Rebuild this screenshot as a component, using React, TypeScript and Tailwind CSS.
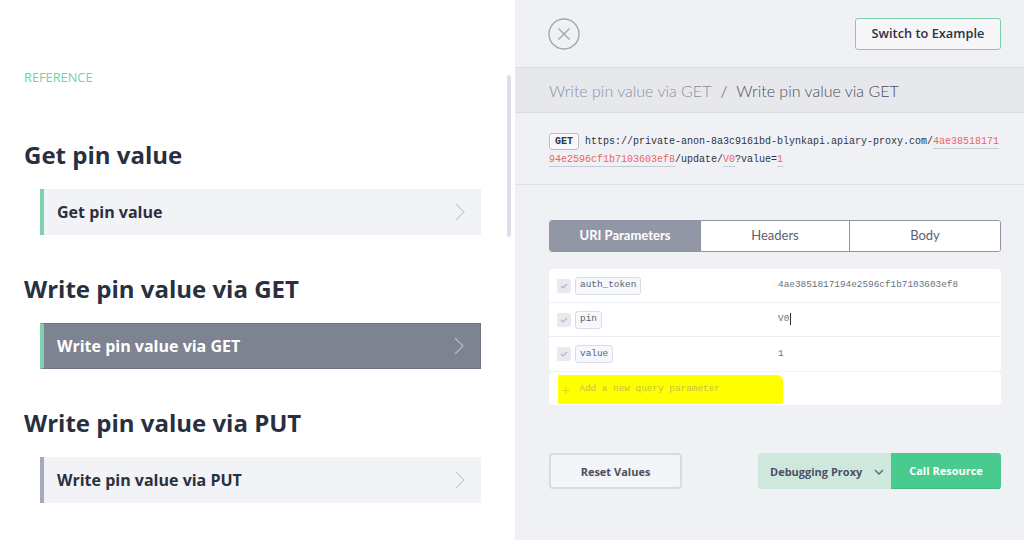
import React from 'react';

const sans = "font-['Lato','Open_Sans',sans-serif]";
const open = "font-['Open_Sans','Lato',sans-serif]";
const mono = "font-['Liberation_Mono','DejaVu_Sans_Mono',monospace]";

function Chevron({ color }: { color: string }) {
  return (
    <svg width="10" height="18" viewBox="0 0 10 18" fill="none" className="shrink-0">
      <path d="M1 1l8 8-8 8" stroke={color} strokeWidth="1.2" />
    </svg>
  );
}

function NavItem({ label, active, bar }: { label: string; active?: boolean; bar: string }) {
  return (
    <div
      className={`ml-4 w-[441px] h-[46px] flex items-center justify-between pl-[13px] pr-[16px] border-l-4 ${bar} ${
        active ? 'bg-[#7e8391] text-white border-y border-r border-y-[#6f7483] border-r-[#6f7483]' : 'bg-[#f2f3f6] text-[#2b2f3f]'
      }`}
    >
      <span className={`${open} text-[16px] font-bold`}>{label}</span>
      <Chevron color={active ? '#b5b9c3' : '#c9ccd5'} />
    </div>
  );
}

function Section({ title, children, first }: { title: string; children: React.ReactNode; first?: boolean }) {
  return (
    <div className={first ? 'mt-[54px]' : 'mt-[38px]'}>
      <h2 className={`${open} text-[24px] leading-[32px] font-bold text-[#2a2f3f]`}>{title}</h2>
      <div className="mt-[18px]">{children}</div>
    </div>
  );
}

function Check() {
  return (
    <div className="w-[14px] h-[14px] rounded-[2px] bg-[#e8eaef] flex items-center justify-center">
      <svg width="8" height="6" viewBox="0 0 8 6" fill="none">
        <path d="M1 3l2 2 4-4" stroke="#b3b7c3" strokeWidth="1.2" />
      </svg>
    </div>
  );
}

function ParamRow({ name, value, cursor, last }: { name: string; value: string; cursor?: boolean; last?: boolean }) {
  return (
    <div className={`flex items-center h-[34px] ${last ? '' : 'border-b border-[#eceef2]'}`}>
      <div className="w-[229px] flex items-center gap-[4px] pl-[8px]">
        <Check />
        <span className={`${mono} text-[9.4px] text-[#5b6170] px-[4px] h-[18px] flex items-center border border-[#d6dcea] bg-[#f6f8fc] rounded-[3px]`}>
          {name}
        </span>
      </div>
      <span className={`${mono} text-[9.4px] text-[#6b7080] flex items-center`}>
        {value}
        {cursor && <span className="inline-block w-px h-[12px] bg-[#333] ml-px" />}
      </span>
    </div>
  );
}

const Red = ({ children }: { children: React.ReactNode }) => (
  <span className="text-[#ef6459] underline decoration-[#c5cad4] underline-offset-[4px]">{children}</span>
);

export default function App() {
  return (
    <div className={`${sans} w-[1024px] h-[540px] flex overflow-hidden`}>
      {/* left: reference nav */}
      <div className="relative w-[515px] h-full bg-white pl-6">
        <p className={`${open} pt-[69px] text-[12.8px] leading-4 text-[#6fd1a8]`}>REFERENCE</p>
        <Section title="Get pin value" first>
          <NavItem label="Get pin value" bar="border-l-[#7fd0ad]" />
        </Section>
        <Section title="Write pin value via GET">
          <NavItem label="Write pin value via GET" bar="border-l-[#7fd0ad]" active />
        </Section>
        <Section title="Write pin value via PUT">
          <NavItem label="Write pin value via PUT" bar="border-l-[#a4a9bb]" />
        </Section>
        <div className="absolute right-[4px] top-[75px] w-[4px] h-[162px] rounded-full bg-[#dcdfe6]" />
      </div>

      {/* right: console */}
      <div className="w-[509px] h-full bg-[#f0f1f5] flex flex-col">
        <div className="h-[67px] flex items-center justify-between pl-[33px] pr-[23px]">
          <svg width="32" height="32" viewBox="0 0 32 32" fill="none">
            <circle cx="16" cy="16" r="15" stroke="#a2a5b3" strokeWidth="1.4" />
            <path d="M10.5 10.5l11 11M21.5 10.5l-11 11" stroke="#a2a5b3" strokeWidth="1.4" />
          </svg>
          <button className={`${open} w-[146px] h-[32px] border border-[#78d2ab] rounded-[3px] bg-white/40 pt-[1px] text-[12.8px] font-semibold text-[#2d3140]`}>
            Switch to Example
          </button>
        </div>

        <div className="h-[46px] bg-[#e7e8ec] border-y border-[#d9dbe1] flex items-center pl-[34px] pt-[1px] text-[16px] font-light">
          <span className="text-[#8d909c]">Write pin value via GET</span>
          <span className="text-[#4b4f5c] mx-[9px]">/</span>
          <span className="text-[#4b4f5c]">Write pin value via GET</span>
        </div>

        <div className="pl-[34px] pr-[22px] pt-[20px] h-[72px] border-b border-[#dfe1e6]">
          <p className={`${mono} text-[10px] leading-[18px] text-[#2f3342] break-all`}>
            <span className="inline-block align-middle mr-[6px] px-[5px] h-[17px] leading-[15px] border border-[#b9bdc7] rounded-[3px] bg-[#f8f8fa] font-bold text-[#2f3342]">
              GET
            </span>
            https://private-anon-8a3c9161bd-blynkapi.apiary-proxy.com/
            <Red>4ae3851817194e2596cf1b7103603ef8</Red>/update/<Red>V0</Red>?value=<Red>1</Red>
          </p>
        </div>

        <div className="pl-[34px] pr-[23px]">
          <div className="mt-[35px] h-[32px] flex border border-[#8f94a3] rounded-[3px] overflow-hidden text-[13px]">
            <div className="w-[150px] bg-[#9297a5] text-white font-bold flex items-center justify-center">URI Parameters</div>
            <div className="w-[149px] bg-white text-[#5d6170] border-l border-[#8f94a3] flex items-center justify-center">Headers</div>
            <div className="flex-1 bg-white text-[#5d6170] border-l border-[#8f94a3] flex items-center justify-center">Body</div>
          </div>

          <div className="mt-[17px] bg-white rounded-[4px]">
            <ParamRow name="auth_token" value="4ae3851817194e2596cf1b7103603ef8" />
            <ParamRow name="pin" value="V0" cursor />
            <ParamRow name="value" value="1" last />
          </div>
          <div className="mt-px h-[33px] bg-white rounded-[4px] flex items-center pl-[9px]">
            <div className="w-[225px] h-[29px] mt-[2px] bg-[#ffff00] rounded-[1px_6px_3px_2px] flex items-center pl-[3px] gap-[9px] text-[#c3c34a]">
              <span className="text-[16px] leading-none font-light">+</span>
              <span className={`${mono} text-[9.4px]`}>Add a new query parameter</span>
            </div>
          </div>

          <div className="mt-[48px] flex items-center justify-between">
            <button className={`${open} w-[133px] h-[36px] border-2 border-[#d7dbe5] rounded-[4px] bg-[#f4f5f8] pt-[2px] text-[11px] font-bold text-[#4b5062]`}>
              Reset Values
            </button>
            <div className={`${open} flex h-[36px] rounded-[3px] overflow-hidden text-[11px] font-bold`}>
              <div className="w-[133px] bg-[#cfe8de] flex items-center justify-between pl-[12px] pr-[7px] pt-[2px] text-[#4b5062]">
                Debugging Proxy
                <svg width="10" height="6" viewBox="0 0 10 6" fill="none">
                  <path d="M1 1l4 4 4-4" stroke="#6c7282" strokeWidth="1.6" />
                </svg>
              </div>
              <div className="w-[110px] bg-[#48cb8c] border-b border-[#3dbb7e] flex items-center justify-center pt-[2px] text-white">
                Call Resource
              </div>
            </div>
          </div>
        </div>
      </div>
    </div>
  );
}
